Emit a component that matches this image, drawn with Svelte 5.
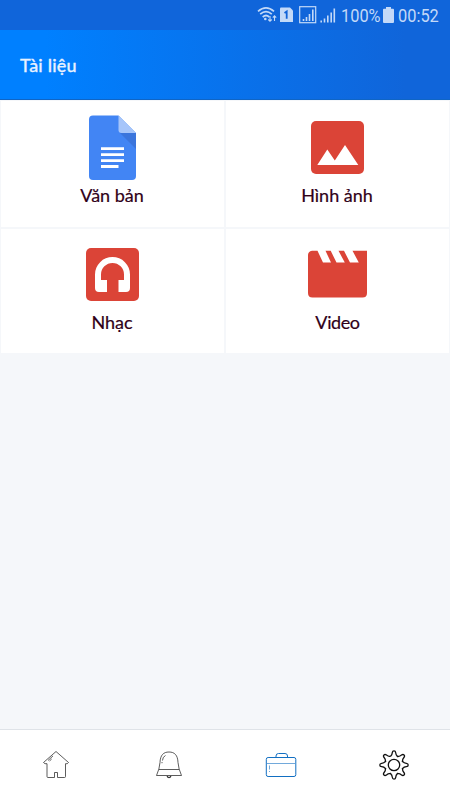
<script>
    const tiles = [
        { id: 'doc', label: 'Văn bản' },
        { id: 'image', label: 'Hình ảnh' },
        { id: 'music', label: 'Nhạc' },
        { id: 'video', label: 'Video' }
    ];

    // one gear tooth, pointing up, repeated every 45 degrees
    const tooth = [[-3.1, -9.1], [-2, -9.8], [-1.7, -12.3], [-1.5, -14.2], [0, -14.2],
        [1.5, -14.2], [1.7, -12.3], [2, -9.8], [3.1, -9.1]];

    function gearPath() {
        let d = '';
        for (let k = 0; k < 8; k++) {
            const a = k * Math.PI / 4;
            const p = tooth.map(([x, y]) =>
                (x * Math.cos(a) - y * Math.sin(a)).toFixed(2) + ' ' + (x * Math.sin(a) + y * Math.cos(a)).toFixed(2));
            // shallow valley between two teeth
            const v = a - Math.PI / 8;
            const valley = (8.5 * Math.sin(v)).toFixed(2) + ' ' + (-8.5 * Math.cos(v)).toFixed(2);
            d += k ? 'Q' + valley + ' ' + p[0] : 'M' + p[0];
            for (let i = 1; i < 9; i += 2) {
                d += 'Q' + p[i] + ' ' + p[i + 1];
            }
        }
        return d + 'Z';
    }
</script>

<div class="screen">
    <div class="status">
        <svg class="signals" width="82" height="20" viewBox="0 0 82 20" fill="none" stroke="#c3d9f8">
            <g stroke-width="1.7">
                <path d="M1 6.3Q9 -.7 17 6.3M3.2 9.2Q9 4 14.8 9.2M5.7 12Q9 9 12.3 12"/>
            </g>
            <circle cx="8.3" cy="14" r="1.3" fill="#c3d9f8" stroke="none"/>
            <path d="M13 11v5M11.3 14.500l1.700 1.800 1.700-1.800M17.500 16v-5M15.800 12.700l1.700-1.800 1.700 1.800" stroke-width="1.1"/>
            <path d="M24 2.500h9l3 3V17H23V3.500q0-1 1-1z" fill="#c3d9f8" stroke="none"/>
            <path d="M27.500 8l2.200-1.500v7.300" stroke="#1163d8" stroke-width="1.800"/>
            <rect x="42.700" y="1.700" width="16" height="16" stroke-width="1.200"/>
            <path d="M46.500 16v-2M49.500 16v-4M52.500 16v-7M55.800 16V4.500M64.200 17.500v-2M67.500 17.500v-4M70.800 17.500v-7M74.200 17.500v-10M77.300 17.500V3.500" stroke-width="1.600"/>
        </svg>
        <span class="percent">100%</span>
        <svg class="battery" width="11" height="16" viewBox="0 0 11 16"><path d="M3 0h5v1.700h2q1 0 1 1V15q0 1-1 1H1q-1 0-1-1V2.700q0-1 1-1h2z" fill="#c3d9f8"/></svg>
        <span class="clock">00:52</span>
    </div>

    <header><h1>Tài liệu</h1></header>

    <main>
        <div class="grid">
            {#each tiles as tile}
                <div class="tile">
                    <svg class="icon" width="64" height="68" viewBox="0 0 64 68">
                        {#if tile.id === 'doc'}
                            <path d="M13 2.500H38.500l17.500 17.500v43q0 4-4 4H13q-4 0-4-4V6.500q0-4 4-4z" fill="#4285f4"/>
                            <path d="M40 20h16v16z" fill="#3b75dc"/>
                            <path d="M38.500 2.500L56 20H41.500q-3 0-3-3z" fill="#a6c5fa"/>
                            <path d="M21 35.700h23M21 41.700h23M21 47.700h23M21 53.500h17.500" stroke="#fff" stroke-width="2.800"/>
                        {:else if tile.id === 'image'}
                            <rect x="6" y="8" width="53" height="53" rx="5" fill="#db4437"/>
                            <path d="M12.300 52L22.300 36.500l7.500 11L40 32 53.300 52z" fill="#fff"/>
                        {:else if tile.id === 'music'}
                            <rect x="6" y="8" width="53" height="53" rx="5" fill="#db4437"/>
                            <path d="M15 34.500a17.500 17.500 0 0 1 35 0V48q0 4-4 4h-7.500V40H44v-5.500a11.500 11.500 0 0 0-23 0V40h6v12h-8q-4 0-4-4z" fill="#fff"/>
                        {:else}
                            <path d="M7 10.800H12.500L18 22.500H26L20.500 10.800H25.700L31.500 22.500H39.800L33.500 10.800H39L45 22.500H53.800L47.500 10.800H62V53q0 4.500-4.500 4.500H7.500q-4.500 0-4.500-4.500V15q0-3.500 4-4.200z" fill="#db4437"/>
                        {/if}
                    </svg>
                    <span class={tile.id}>{tile.label}</span>
                </div>
            {/each}
        </div>
    </main>

    <nav>
        <svg width="32" height="32" viewBox="0 0 32 32">
            <path d="M3.500 13.500L16 2.500l4 3.500L28.500 13.500l-1.200 1.200H25.500V27.500q0 1-1 1H17.500v-5H14.500v5H8q-1 0-1-1V14.700H5z"/>
            <path d="M8 11.500l5-4.600M9.500 12l2.200-2"/>
        </svg>
        <svg width="32" height="32" viewBox="0 0 32 32">
            <path d="M3.500 26.500Q6.500 20 7 13.500C7.300 6 10.500 3 16 3S24.700 6 25 13.500q.5 6.500 3.500 13z"/>
            <path d="M6 20.500h20M9.500 11.500q0-3.500 3-5M9 13v1.200"/>
            <path d="M14.200 27q0 1.500 1.800 1.500t1.800-1.500" stroke-width="1.300"/>
        </svg>
        <svg class="active" width="32" height="32" viewBox="0 0 32 32">
            <rect x="1.300" y="8.500" width="29.500" height="19" rx="1.800"/>
            <path d="M11 8V7q0-2.500 2.500-2.500h6.500Q22.500 4.500 22.500 7v1"/>
            <path d="M2 14.500h28M4.500 16.500v4M4.500 22v1" stroke-width=".6"/>
        </svg>
        <svg class="gear" width="32" height="32" viewBox="-16 -16 32 32">
            <path d={gearPath()}/>
            <circle r="5.700"/>
        </svg>
    </nav>
</div>

<style>
    :global(body) {
        margin: 0;
    }

    .screen {
        width: 450px;
        height: 800px;
        display: flex;
        flex-direction: column;
        background: #f5f7fa;
        font-family: Lato, sans-serif;
    }

    .status {
        height: 30px;
        box-sizing: border-box;
        padding-right: 10px;
        display: flex;
        align-items: center;
        justify-content: flex-end;
        background: #1065da;
        color: #c3d9f8;
        font-family: Roboto, sans-serif;
        font-size: 18px;
    }

    .signals {
        margin-right: 2px;
    }

    .percent,
    .clock {
        width: 40px;
        white-space: nowrap;
        transform: scaleX(.91);
        transform-origin: left;
    }

    .percent {
        margin-right: 2px;
    }

    .clock {
        width: 42px;
        margin-left: 4px;
    }

    header {
        height: 70px;
        box-sizing: border-box;
        padding: 0 20px;
        display: flex;
        align-items: center;
        background: linear-gradient(to right, #0080ff 10%, #1065da 90%);
        border-bottom: 1px solid #1065c5;
    }

    h1 {
        margin: 0;
        color: #e8f1ff;
        font-size: 18px;
        font-weight: 500;
        letter-spacing: .2px;
        -webkit-text-stroke: .3px #e8f1ff;
    }

    main {
        flex: 1;
        padding: 1px;
    }

    .grid {
        display: grid;
        grid-template-columns: 1fr 1fr;
        grid-template-rows: 126px 124px;
        gap: 2px;
    }

    .tile {
        display: flex;
        flex-direction: column;
        align-items: center;
        padding-top: 12px;
        padding-right: 1px;
        background: #fff;
        color: #300018;
        font-size: 18px;
        line-height: 24px;
        -webkit-text-stroke: .2px #300018;
    }

    .tile:nth-child(n + 3) {
        padding-top: 11px;
    }

    .tile span {
        margin-top: 2px;
    }

    .tile .video {
        letter-spacing: -.4px;
        padding-left: 1px;
    }

    nav {
        height: 71px;
        box-sizing: border-box;
        border-top: 1px solid #dfe3e8;
        display: grid;
        grid-template-columns: repeat(4, 1fr);
        align-items: center;
        justify-items: center;
        background: #fff;
    }

    nav svg {
        fill: none;
        stroke: #333;
        stroke-width: .8;
    }

    nav .active {
        stroke: #126fc2;
        stroke-width: 1;
    }

    nav .gear {
        stroke: #111;
        stroke-width: 1.3;
    }
</style>
